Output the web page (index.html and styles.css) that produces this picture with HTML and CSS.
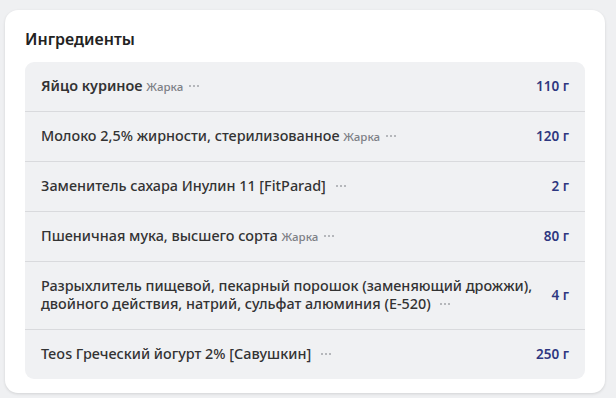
FILE: index.html
```html
<!DOCTYPE html>
<html lang="ru">
<head>
<meta charset="utf-8">
<link rel="stylesheet" href="styles.css">
</head>
<body>
<div class="page">
  <section class="card">
    <h2 class="title">Ингредиенты</h2>
    <ul class="list">
      <li class="row">
        <div class="name strong">Яйцо куриное <span class="tag">Жарка</span><span class="dots"><i></i><i></i><i></i></span></div>
        <div class="amount">110 г</div>
      </li>
      <li class="row">
        <div class="name">Молоко 2,5% жирности, стерилизованное <span class="tag">Жарка</span><span class="dots"><i></i><i></i><i></i></span></div>
        <div class="amount">120 г</div>
      </li>
      <li class="row">
        <div class="name">Заменитель сахара Инулин 11 [FitParad] <span class="dots wide"><i></i><i></i><i></i></span></div>
        <div class="amount">2 г</div>
      </li>
      <li class="row">
        <div class="name">Пшеничная мука, высшего сорта <span class="tag">Жарка</span><span class="dots"><i></i><i></i><i></i></span></div>
        <div class="amount">80 г</div>
      </li>
      <li class="row">
        <div class="name">Разрыхлитель пищевой, пекарный порошок (заменяющий дрожжи), двойного действия, натрий, сульфат алюминия (E-520) <span class="dots wide"><i></i><i></i><i></i></span></div>
        <div class="amount">4 г</div>
      </li>
      <li class="row">
        <div class="name">Teos Греческий йогурт 2% [Савушкин] <span class="dots wide"><i></i><i></i><i></i></span></div>
        <div class="amount">250 г</div>
      </li>
    </ul>
  </section>
</div>
</body>
</html>
```

FILE: styles.css
```css
* { box-sizing: border-box; }
html, body { margin: 0; padding: 0; }
body {
  background: #eff0f2;
  font-family: "Noto Sans", "Open Sans", sans-serif;
  color: #333;
  width: 616px;
  height: 398px;
  overflow: hidden;
}
.page {
  padding: 10px 11px 5px 5px;
}
.card {
  background: #fff;
  border-radius: 13px;
  box-shadow: 0 1px 3px rgba(0,0,0,0.12);
  padding: 18px 20px 15px 20px;
  height: 383px;
}
.title {
  margin: 0 0 12px 0;
  font-size: 16px;
  line-height: 22px;
  font-weight: 600;
  color: #222;
}
.list {
  list-style: none;
  margin: 0;
  padding: 0;
  background: #f0f1f3;
  border-radius: 9px;
}
.row {
  display: flex;
  align-items: center;
  justify-content: space-between;
  gap: 16px;
  padding: 15px 16px 16px 16px;
  border-top: 1px solid #d9dadd;
  font-size: 14.4px;
  line-height: 18px;
}
.row:first-child { border-top: none; }
.name {
  font-weight: 500;
  color: #333;
}
.name.strong { font-weight: 600; }
.tag {
  font-size: 11.5px;
  line-height: 0;
  color: #7d8086;
  font-weight: 500;
}
.dots {
  display: inline-flex;
  gap: 2px;
  margin-left: 6px;
  vertical-align: 4px;
}
.dots i {
  width: 2px;
  height: 2px;
  background: #b5b7bb;
  display: block;
}
.amount {
  flex: none;
  font-size: 13.5px;
  color: #2e3780;
  font-weight: 600;
  white-space: nowrap;
}
```
